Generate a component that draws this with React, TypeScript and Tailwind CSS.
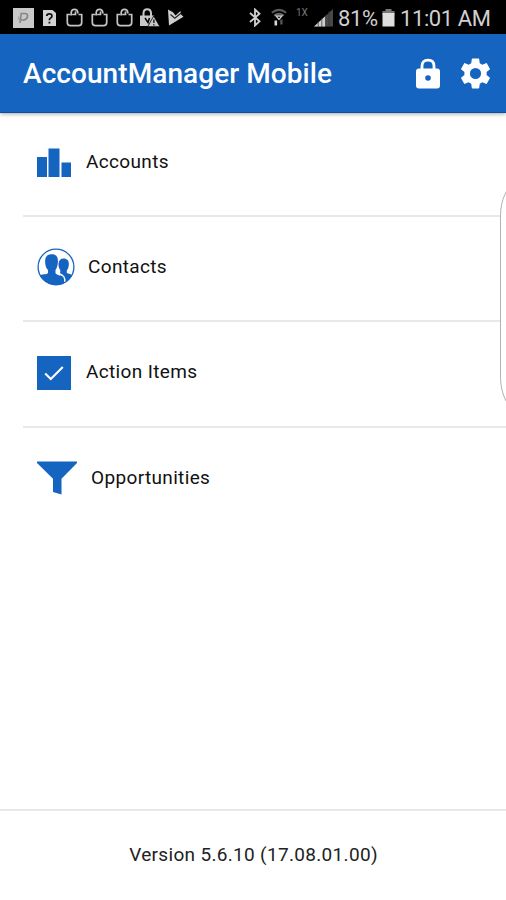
import { ReactNode } from "react";

interface MenuItem {
  label: string;
  icon: ReactNode;
  rowClass: string;
  labelClass: string;
}

const BagIcon = () => (
  <svg className="h-5 w-[17px]" viewBox="0 0 17 20" fill="none" stroke="#c4c4c4" strokeWidth="1.7">
    <path d="M4.5 6.5H1.3V14.5Q1.3 17.7 4.5 17.7H12.5Q15.7 17.7 15.7 14.5V6.5H12.5" />
    <path d="M5.2 7.5V4.5Q5.5 1.4 8.5 1.4T11.8 4.5V5.5M6.2 6.5H9.5V3.5" />
  </svg>
);

const NotificationIcons = () => (
  <div className="flex items-start pt-2">
    <svg className="ml-[13px] h-5 w-[21px]" viewBox="0 0 21 20">
      <path d="M0 0H21V20H0Z" fill="#c9c9c9" />
      <path d="M7 15L8.2 5.5H12Q15 5.5 14.5 8.5T10.5 12H8" fill="none" stroke="#858585" strokeWidth="1.6" />
      <path d="M5.5 8.5Q5 12 8 13.2" fill="none" stroke="#999" />
    </svg>
    <svg className="ml-[9px] h-5 w-[13px]" viewBox="0 0 13 20">
      <path d="M0 2H9.5L13 5V18H0Z" fill="#d2d2d2" />
      <path d="M3.8 8Q3.8 5.8 6.4 5.8T8.9 8Q8.9 9.4 7.6 10T6.4 12.2M6.4 13.8V15.6" fill="none" stroke="#111" strokeWidth="1.8" />
    </svg>
    <div className="ml-2.5 flex gap-2">
      <BagIcon />
      <BagIcon />
      <BagIcon />
    </div>
    <svg className="ml-[7px] h-5 w-5" viewBox="0 0 20 20">
      <path d="M3.5 8V5.2Q3.5 1.2 7.2 1.2T11 5.2V8" fill="none" stroke="#c8c8c8" strokeWidth="2" />
      <path d="M0 7.5H14V18H0Z" fill="#c8c8c8" />
      <path d="M5 10L8 14.5L9.5 10" fill="none" stroke="#000" strokeWidth="1.5" />
      <path d="M13.7 8L20 18.7H7.7Z" fill="#c8c8c8" stroke="#000" strokeWidth=".8" />
      <path d="M13.9 11.5V15M13.9 16.2V17.5" stroke="#000" strokeWidth="1.2" />
    </svg>
    <svg className="ml-2 h-5 w-4" viewBox="0 0 16 20">
      <path d="M0 1.5L5 4.2L7.5 7.5L12.5 3L13 6.5L15.5 8.8L1 17.5Z" fill="#cecece" />
      <path d="M2.5 6.5L6.8 10.2L13.5 4.8" fill="none" stroke="#222" strokeWidth="1.1" />
    </svg>
  </div>
);

const SystemIcons = () => (
  <div className="flex items-start pr-[15px]">
    <svg className="mt-2 h-[19px] w-3" viewBox="0 0 12 19" fill="none" stroke="#d0d0d0" strokeWidth="1.8">
      <path d="M1 5L10.5 13.2L6 17.5V1.5L10.5 5.8L1 14" />
    </svg>
    <svg className="ml-2.5 mt-2 h-[19px] w-4" viewBox="0 0 16 19" fill="none">
      <path d="M.8 4.8Q8 -1 15.2 4.8" stroke="#5b5b5b" strokeWidth="2" />
      <path d="M3.2 7.5Q8 4 12.8 7.5" stroke="#666" strokeWidth="1.8" />
      <path d="M5 8H11L8 11.5Z" stroke="#c8c8c8" strokeWidth="1.3" />
      <path d="M4.8 12.5V17.5" stroke="#d8d8d8" strokeWidth="2.6" />
      <path d="M10.4 11.5V16.5" stroke="#555" strokeWidth="2.4" />
    </svg>
    <span className="ml-[9px] mt-2 w-3 text-[10px] leading-[10px] text-[#777]">1X</span>
    <svg className="ml-[6px] mt-2 h-[19px] w-[19px]" viewBox="0 0 19 19">
      <path d="M0 18.5L19 1V18.5Z" fill="#484848" />
      <path d="M0 18.5L11.5 8V18.5Z" fill="#cfcfcf" />
      <path d="M4.2 13V19M7.8 10V19M11.5 7V19M15 3V19" stroke="#333" strokeWidth=".7" />
    </svg>
    <span className="ml-[5px] mt-[7px] w-[40px] text-[22px] leading-6 tracking-[-0.4px]">81%</span>
    <svg className="ml-1 mt-2 h-[19px] w-[13px]" viewBox="0 0 13 19">
      <path d="M3.5 1H9.5V3H12.5V7H.5V3H3.5Z" fill="#777" />
      <path d="M.5 5H12.5V18.5H.5Z" fill="#dedede" />
    </svg>
    <span className="ml-[5px] mt-[7px] w-[91px] whitespace-nowrap text-[22px] leading-6 tracking-[-0.4px]">11:01 AM</span>
  </div>
);

const AccountsIcon = () => (
  <svg className="h-[30px] w-[34px]" viewBox="0 0 34 30" fill="#1565c0">
    <path d="M0 9H10V29H0ZM11.5 .5H22.5V29H11.5ZM24.5 14.5H34V29H24.5Z" />
  </svg>
);

const ContactsIcon = () => (
  <svg className="h-[38px] w-[38px]" viewBox="0 0 38 38">
    <defs>
      <clipPath id="contacts-circle">
        <circle cx="19" cy="19" r="18" />
      </clipPath>
    </defs>
    <g clipPath="url(#contacts-circle)" fill="#1565c0">
      <path d="M26.5 10.5C30.8 10.5 32.2 13.5 31.8 17C31.6 19.5 30.8 21.5 29.8 22.5V25L37 27.5V38H23V26L23.4 22.5C22 20.5 21.3 18 21.5 15.5C21.8 12.5 23.5 10.5 26.5 10.5Z" />
      <path d="M14.8 6.2C19.5 6.2 21.3 9.3 20.9 14C20.7 17.5 19.8 20.5 18.5 22V25.3C20 27.3 25 27.5 26.5 30C28 32.2 28.2 35 28 38H0V28C4 26 10 26.8 11 25V22C9.1 20.3 8.1 17 8.1 13.5C8.1 9 10 6.2 14.8 6.2Z" />
      <path d="M21.3 22.5V25.2L25.5 27.5Q28.3 29.5 27.8 34" fill="none" stroke="white" strokeWidth="1.5" />
    </g>
    <circle cx="19" cy="19" r="17.9" fill="none" stroke="#1565c0" strokeWidth="1.3" />
  </svg>
);

const ActionIcon = () => (
  <svg className="h-[34px] w-[34px]" viewBox="0 0 34 34">
    <path d="M0 0H34V34H0Z" fill="#1565c0" />
    <path d="M8.2 17.5L13.8 23L25.8 11" fill="none" stroke="white" strokeWidth="2.1" />
  </svg>
);

const FunnelIcon = () => (
  <svg className="h-[34px] w-10" viewBox="0 0 40 34">
    <path d="M0 .5H40V2L24.5 17.8V33.5L16 31V17.8L0 2Z" fill="#1565c0" />
  </svg>
);

const menuItems: MenuItem[] = [
  { label: "Accounts", icon: <AccountsIcon />, rowClass: "h-[104px] pt-[28px]", labelClass: "ml-[15px] pb-0.5" },
  { label: "Contacts", icon: <ContactsIcon />, rowClass: "h-[105px] pt-[28px]", labelClass: "ml-[13px]" },
  { label: "Action Items", icon: <ActionIcon />, rowClass: "h-[106px] pt-[29px]", labelClass: "ml-[15px] pb-px" },
  { label: "Opportunities", icon: <FunnelIcon />, rowClass: "h-[105px] pt-[28px] border-transparent", labelClass: "ml-[14px]" }
];

const App = () => {
  return (
    <div className="relative flex h-[900px] w-[506px] flex-col overflow-hidden bg-white font-[Roboto,sans-serif] text-[#111]">
      <div className="flex h-[34px] shrink-0 justify-between bg-black text-[#d0d0d0]">
        <NotificationIcons />
        <SystemIcons />
      </div>

      <header className="flex h-[79px] shrink-0 items-center border-b border-[#0d4f9f] bg-[#1565c0] pl-[23px] text-white shadow-[0_1px_4px_rgba(0,0,0,0.35)]">
        <h1 className="flex-1 whitespace-nowrap pt-0.5 text-[28px] font-medium tracking-[0.07px]">AccountManager Mobile</h1>
        <svg className="mr-5 h-[31px] w-6" viewBox="0 0 24 31">
          <path d="M6 12V8Q6 2.2 12 2.2T18 8V12" fill="none" stroke="white" strokeWidth="2.8" />
          <path
            d="M3 10.5H21Q24 10.5 24 13.5V27.5Q24 30.5 21 30.5H3Q0 30.5 0 27.5V13.5Q0 10.5 3 10.5ZM12 17.2A2.8 2.8 0 1 0 12 22.8A2.8 2.8 0 1 0 12 17.2Z"
            fill="white"
            fillRule="evenodd"
          />
        </svg>
        <svg className="mr-[15px] h-[31px] w-[31px]" viewBox="2 2 20 20" fill="white">
          <path d="M19.14 12.94c.04-.3.06-.61.06-.94 0-.32-.02-.64-.07-.94l2.03-1.58c.18-.14.23-.41.12-.61l-1.92-3.32c-.12-.22-.37-.29-.59-.22l-2.39.96c-.5-.38-1.03-.7-1.62-.94L14.4 2.81c-.04-.24-.24-.41-.48-.41h-3.84c-.24 0-.43.17-.47.41L9.25 5.35c-.59.24-1.13.57-1.62.94l-2.39-.96c-.22-.08-.47 0-.59.22L2.74 8.87c-.12.21-.08.47.12.61l2.03 1.58c-.05.3-.09.63-.09.94s.02.64.07.94l-2.03 1.58c-.18.14-.23.41-.12.61l1.92 3.32c.12.22.37.29.59.22l2.39-.96c.5.38 1.03.7 1.62.94l.36 2.54c.05.24.24.41.48.41h3.84c.24 0 .44-.17.47-.41l.36-2.54c.59-.24 1.13-.56 1.62-.94l2.39.96c.22.08.47 0 .59-.22l1.92-3.32c.12-.22.07-.47-.12-.61zM12 15.6A3.6 3.6 0 1 1 12 8.4a3.6 3.6 0 0 1 0 7.2" />
        </svg>
      </header>

      <main className="flex-1 pl-[23px]">
        {menuItems.map((item) => (
          <div key={item.label} className={`border-b-2 border-[#e8e8e8] pl-3.5 ${item.rowClass}`}>
            <div className="flex h-11 items-center">
              {item.icon}
              <span className={`whitespace-nowrap text-[19px] tracking-[0.35px] ${item.labelClass}`}>{item.label}</span>
            </div>
          </div>
        ))}
      </main>

      <footer className="flex h-[91px] shrink-0 items-center justify-center border-t-2 border-[#e8e8e8] pl-px text-[19px] tracking-[0.32px] text-[#222]">
        Version 5.6.10 (17.08.01.00)
      </footer>

      {/* edge panel handle */}
      <div className="absolute -right-7 top-[184px] h-[225px] w-[34px] rounded-[50%/32px] border border-[#b4b4b4] bg-white" />
    </div>
  );
};

export default App;
